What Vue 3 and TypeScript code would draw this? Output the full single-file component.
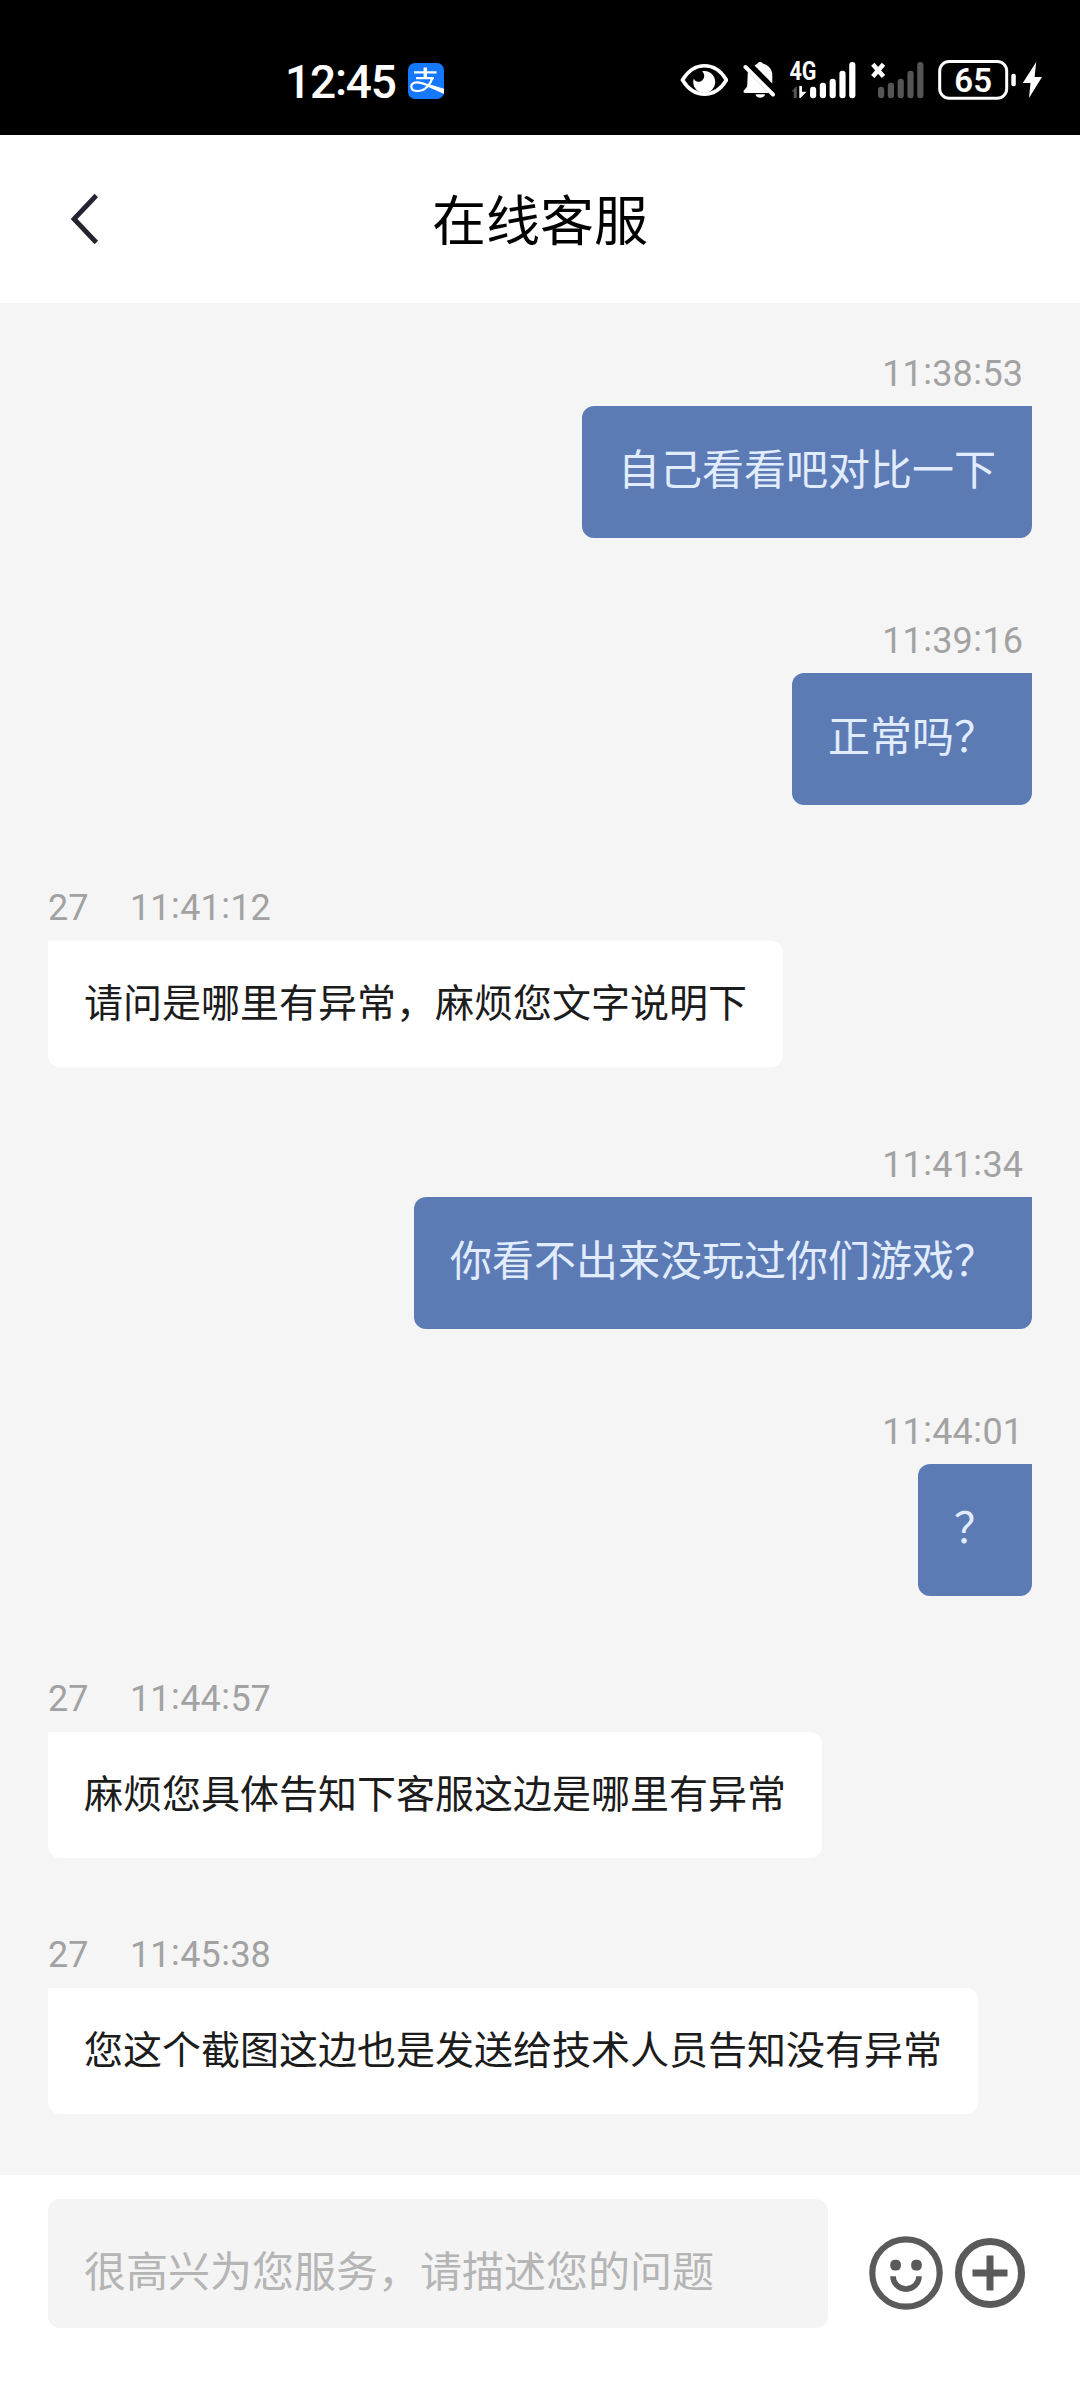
<script setup lang="ts">
interface Message {
  from: 'user' | 'agent'
  time: string
  text: string
}

const agentId = '27'

const messages: Message[] = [
  { from: 'user', time: '11:38:53', text: '自己看看吧对比一下' },
  { from: 'user', time: '11:39:16', text: '正常吗？' },
  { from: 'agent', time: '11:41:12', text: '请问是哪里有异常，麻烦您文字说明下' },
  { from: 'user', time: '11:41:34', text: '你看不出来没玩过你们游戏？' },
  { from: 'user', time: '11:44:01', text: '？' },
  { from: 'agent', time: '11:44:57', text: '麻烦您具体告知下客服这边是哪里有异常' },
  { from: 'agent', time: '11:45:38', text: '您这个截图这边也是发送给技术人员告知没有异常' },
]

const barTops = [86.7, 82.7, 78.7, 70.7, 62]
</script>

<template>
  <div class="screen">
    <div class="status">
      <div class="clock">12<span class="colon">:</span>45</div>
      <svg class="pay" width="36" height="50" viewBox="0 -7 36 50">
        <rect width="36" height="36" rx="7" fill="#1677ff" />
        <path d="M6 9.3H28.5M8 15.2H26" stroke="#fff" stroke-width="2.2" fill="none" />
        <path d="M17.3 4.5V15" stroke="#fff" stroke-width="3.4" fill="none" />
        <path d="M24.6 14.6C22.5 21 17.5 28 9.5 28C1.5 28 1.2 19.6 8.6 19.4C16 19.2 24 25 36 28.6" stroke="#fff" stroke-width="2.2" fill="none" />
        <path d="M22 21.6L36 25.8V31L19.5 23.6Z" fill="#fff" />
      </svg>
      <svg class="eye" width="48" height="50" viewBox="680 56 48 50">
        <path d="M682.5 80C688 71 695.5 65.8 704.5 65.8S721 71 726.5 80C721 89 713.5 94.2 704.5 94.2S688 89 682.5 80Z" fill="none" stroke="#fff" stroke-width="3.6" />
        <path d="M702 71.2A11 11 0 1 1 693.8 78.5C695 82.2 699.5 82.8 702.3 80.3C705 77.7 704.8 73.5 702 71.2Z" fill="#fff" />
      </svg>
      <svg class="bell" width="34" height="50" viewBox="743 56 34 50">
        <path d="M754.5 65.5C756 64.3 757 64.2 757.5 63.5C758.5 61.5 761.8 61.5 762.8 63.5C769 65.5 772.3 69.5 772.3 75V83.5Z" fill="#fff" />
        <path d="M747.8 72L769 93H745C743.2 93 743 90.8 744.5 89.8L747.2 86.5Z" fill="#fff" />
        <path d="M745.5 67L773 94.5" stroke="#fff" stroke-width="4" stroke-linecap="round" />
        <path d="M755.5 94.3H765C764.3 99 756.2 99 755.5 94.3Z" fill="#fff" />
      </svg>
      <svg class="signal" width="68" height="50" viewBox="788 56 68 50">
        <text x="789.5" y="79.7" class="net" textLength="27" lengthAdjust="spacingAndGlyphs">4G</text>
        <path d="M791.5 91.5L796.8 86V98H793.7V91.5Z" fill="#555" />
        <path d="M799.3 86H802V91.8H806.5L800.5 98H799.3Z" fill="#fff" />
        <rect v-for="(top, i) in barTops" :key="i" :x="810 + i * 9.8" :y="top" width="6.2" :height="98.2 - top" rx="3" fill="#fff" />
      </svg>
      <svg class="nosim" width="56" height="50" viewBox="870 56 56 50">
        <path d="M872.8 64.3L883.5 76.5M883.5 64.3L872.8 76.5" stroke="#fff" stroke-width="4.5" />
        <rect v-for="(top, i) in barTops" :key="i" :x="878 + i * 9.8" :y="top" width="6.2" :height="98.2 - top" rx="3" fill="#555" />
      </svg>
      <svg class="battery" width="108" height="50" viewBox="936 56 108 50">
        <rect x="939.7" y="61.5" width="67" height="36.8" rx="9.5" fill="none" stroke="#fff" stroke-width="3" />
        <text x="973.2" y="92.2" text-anchor="middle" class="level">65</text>
        <rect x="1011.3" y="73.7" width="4.5" height="12.6" rx="2" fill="#fff" />
        <path d="M1036.2 62L1022.8 83H1030.5L1029 98L1042 77H1034.6Z" fill="#fff" />
      </svg>
    </div>

    <header class="header">
      <svg class="back" width="30" height="52" viewBox="70 193 30 52">
        <path d="M96.3 195.5L74 219L96.3 242.5" fill="none" stroke="#25232f" stroke-width="4.8" />
      </svg>
      <h1 class="title">在线客服</h1>
    </header>

    <main class="chat">
      <div v-for="m in messages" :key="m.time" class="message" :class="m.from">
        <div class="meta">
          <span v-if="m.from === 'agent'" class="name">{{ agentId }}</span>
          <span class="time"><template v-for="(part, i) in m.time.split(':')" :key="i"><span v-if="i" class="colon">:</span>{{ part }}</template></span>
        </div>
        <div class="bubble">{{ m.text }}</div>
      </div>
    </main>

    <footer class="composer">
      <div class="field">很高兴为您服务，请描述您的问题</div>
      <svg class="smile" width="74" height="74" viewBox="-37 -37 74 74">
        <circle r="33.7" fill="none" stroke="#5a5a5a" stroke-width="6.2" />
        <rect x="-15.7" y="-13.3" width="10.6" height="10.8" rx="4.5" fill="#5a5a5a" />
        <rect x="5.2" y="-13.3" width="10.6" height="10.8" rx="4.5" fill="#5a5a5a" />
        <path d="M-13 3.3A13 12.8 0 0 0 13 3.3" fill="none" stroke="#5a5a5a" stroke-width="5.6" />
      </svg>
      <svg class="plus" width="70" height="74" viewBox="-35 -37 70 74">
        <circle r="31.5" fill="none" stroke="#5a5a5a" stroke-width="7" />
        <path d="M-17.5 0H17.5M0 -17.5V17.5" stroke="#5a5a5a" stroke-width="7" />
      </svg>
    </footer>
  </div>
</template>

<style>
body {
  background: #fff;
}
</style>

<style scoped>
.screen {
  width: 1080px;
  height: 2400px;
  display: flex;
  flex-direction: column;
  overflow: hidden;
  background: #fff;
  font-family: "Noto Sans CJK SC", sans-serif;
}
.status {
  flex: none;
  box-sizing: border-box;
  height: 135px;
  padding: 56px 36px 0 285px;
  display: flex;
  align-items: flex-start;
  background: #000;
}
.status svg {
  flex: none;
  display: block;
}
.clock {
  width: 123px;
  flex: none;
  font: 500 46px/48px Roboto, sans-serif;
  letter-spacing: -1.2px;
  color: #fff;
  white-space: nowrap;
}
.clock .colon {
  vertical-align: 3px;
  line-height: 1;
}
.eye { margin-left: 236px; }
.bell { margin-left: 15px; }
.signal { margin-left: 11px; }
.nosim { margin-left: 14px; }
.battery { margin-left: 10px; }
.net {
  font: 700 25px Roboto, sans-serif;
  fill: #fff;
}
.level {
  font: 600 33px Roboto, sans-serif;
  fill: #fff;
}
.header {
  flex: none;
  height: 168px;
  display: flex;
  align-items: center;
  padding: 0 70px;
}
.back {
  flex: none;
}
.title {
  flex: 1;
  margin: 0 30px 3px 0;
  text-align: center;
  font-size: 54px;
  line-height: 80px;
  font-weight: 400;
  color: #000;
}
.chat {
  flex: none;
  box-sizing: border-box;
  height: 1872px;
  padding: 47px 48px 0;
  display: flex;
  flex-direction: column;
  background: #f5f5f5;
}
.message {
  display: flex;
  flex-direction: column;
}
.user {
  align-items: flex-end;
}
.agent {
  align-items: flex-start;
}
.user + .message {
  margin-top: 79px;
}
.agent + .user {
  margin-top: 74px;
}
.agent + .agent {
  margin-top: 73px;
}
.meta {
  height: 46px;
  display: flex;
  font: 400 36px/48px Roboto, sans-serif;
  color: #a2a2a2;
  white-space: nowrap;
}
.name {
  width: 82px;
}
.meta .colon {
  vertical-align: 2.5px;
  line-height: 1;
  padding: 0 0.5px;
}
.user .meta {
  margin-bottom: 10px;
  padding-right: 9px;
}
.agent .meta {
  margin-bottom: 11px;
}
.bubble {
  box-sizing: border-box;
  padding: 0 36px;
  white-space: nowrap;
}
.user .bubble {
  height: 132px;
  font-size: 42px;
  line-height: 122px;
  color: #e1ecff;
  background: #5c7bb5;
  border-radius: 12px 0 12px 12px;
}
.agent .bubble {
  height: 126px;
  font-size: 39px;
  line-height: 119px;
  color: #1c1c1c;
  background: #fff;
  border-radius: 0 12px 12px 12px;
}
.composer {
  flex: none;
  display: flex;
  align-items: flex-start;
  padding: 24px 55px 0 48px;
}
.field {
  box-sizing: border-box;
  width: 780px;
  height: 129px;
  padding-left: 36px;
  border-radius: 12px;
  background: #f4f4f4;
  font-size: 42px;
  line-height: 140px;
  color: #b5b5b5;
  white-space: nowrap;
}
.smile {
  margin: 37px 0 0 41px;
}
.plus {
  margin: 37px 0 0 12px;
}
</style>
